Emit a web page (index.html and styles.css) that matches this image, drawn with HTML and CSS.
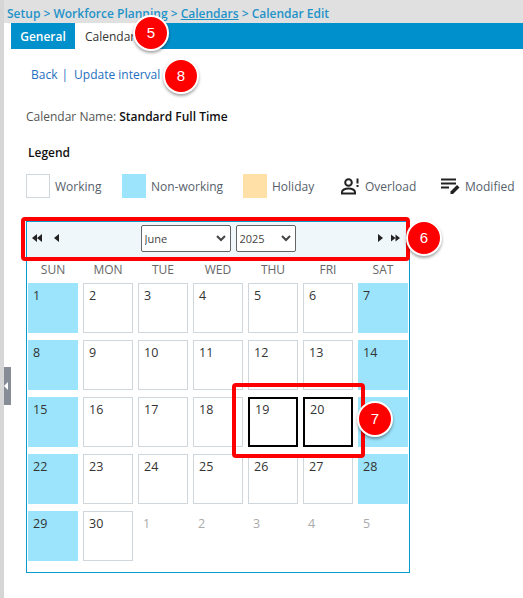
FILE: index.html
```html
<!DOCTYPE html>
<html lang="en">

<head>
    <meta charset="utf-8">
    <meta name="viewport" content="width=device-width, initial-scale=1.0">
    <title>Calendar Edit</title>
    <link rel="stylesheet" href="styles.css">
</head>

<body>
    <div class="handle"><span class="handleArrow"></span></div>

    <header class="crumbs">
        <span>Setup &gt; Workforce Planning &gt; <a href="#">Calendars</a> &gt; Calendar Edit</span>
    </header>

    <nav class="tabs">
        <button class="tab valgt">General</button>
        <button class="tab">Calendar</button>
    </nav>

    <main class="content">
        <p class="links"><a href="#">Back</a><span class="sep">|</span><a href="#">Update interval</a></p>
        <p class="calName">Calendar Name: <b>Standard Full Time</b></p>
        <h2 class="legendTitle">Legend</h2>

        <div class="legend">
            <div class="legendItem itemWorking"><span class="swatch working"></span>Working</div>
            <div class="legendItem itemNon"><span class="swatch nonworking"></span>Non-working</div>
            <div class="legendItem itemHoliday"><span class="swatch holiday"></span>Holiday</div>
            <div class="legendItem itemOverload">
                <svg width="18" height="17" viewBox="0 0 18 17" fill="none" stroke="#222" stroke-width="2">
                    <circle cx="7.5" cy="4.5" r="3.3" />
                    <path d="M1 15.5v-1.5c0-2 3-3.5 6.5-3.5s6.5 1.500 6.500 3.500v1.500z" />
                    <path d="M16.500 0.500v5M16.500 7v2" />
                </svg>
                Overload
            </div>
            <div class="legendItem itemModified">
                <svg width="19" height="17" viewBox="0 0 19 17" fill="#222">
                    <rect x="0" y="0.500" width="15" height="2" />
                    <rect x="0" y="4.500" width="15" height="2" />
                    <rect x="0" y="8.500" width="8" height="2" />
                    <path d="M9.500 16v-2.500l6.500-6.500 2.500 2.500-6.500 6.500z" />
                </svg>
                Modified
            </div>
        </div>

        <section class="calendar">
            <div class="calBar">
                <div class="navGroup">
                    <svg width="10" height="8" viewBox="0 0 10 8" fill="#222"><path d="M5 0v8L0 4zM10 0v8L5 4z" /></svg>
                    <svg class="navInner" width="5" height="8" viewBox="0 0 5 8" fill="#222"><path d="M5 0v8L0 4z" /></svg>
                </div>
                <div class="selects">
                    <select class="sel selMonth"><option>June</option></select>
                    <select class="sel selYear"><option>2025</option></select>
                </div>
                <div class="navGroup navRight">
                    <svg class="navInner" width="5" height="8" viewBox="0 0 5 8" fill="#222"><path d="M0 0v8l5-4z" /></svg>
                    <svg width="9" height="8" viewBox="0 0 10 8" fill="#222"><path d="M0 0v8l5-4zM5 0v8l5-4z" /></svg>
                </div>
            </div>

            <div class="weekdays">
                <span>SUN</span><span>MON</span><span>TUE</span><span>WED</span><span>THU</span><span>FRI</span><span>SAT</span>
            </div>

            <div class="days">
                <div class="day off">1</div><div class="day">2</div><div class="day">3</div><div class="day">4</div><div class="day">5</div><div class="day">6</div><div class="day off">7</div>
                <div class="day off">8</div><div class="day">9</div><div class="day">10</div><div class="day">11</div><div class="day">12</div><div class="day">13</div><div class="day off">14</div>
                <div class="day off">15</div><div class="day">16</div><div class="day">17</div><div class="day">18</div><div class="day picked">19</div><div class="day picked">20</div><div class="day off">21</div>
                <div class="day off">22</div><div class="day">23</div><div class="day">24</div><div class="day">25</div><div class="day">26</div><div class="day">27</div><div class="day off">28</div>
                <div class="day off">29</div><div class="day">30</div><div class="day next">1</div><div class="day next">2</div><div class="day next">3</div><div class="day next">4</div><div class="day next">5</div>
            </div>
        </section>
    </main>

    <!-- callouts on top of the screenshot -->
    <div class="redBox box6"></div>
    <div class="redBox box7"></div>
    <div class="badge badge5">5</div>
    <div class="badge badge8">8</div>
    <div class="badge badge6">6</div>
    <div class="badge badge7">7</div>
</body>

</html>
```
FILE: styles.css
```css
* {
    box-sizing: border-box;
}

html,
body {
    margin: 0;
    height: 598px;
    overflow: hidden;
}

body {
    position: relative;
    background-color: white;
    font-family: "Open Sans", sans-serif;
    font-size: 12px;
    color: #333;
    border-left: 4px solid #d6d6d6;
}

a {
    color: #1f6fc0;
    text-decoration: none;
}

/* breadcrumb */
.crumbs {
    height: 23px;
    margin-left: -4px;
    padding: 5px 0 0 7px;
    background-color: #e0e0e0;
    color: #1f93c9;
    font-size: 12px;
    font-weight: 600;
    line-height: 18px;
    white-space: nowrap;
}

.crumbs a {
    color: #1f93c9;
    text-decoration: underline;
}

/* tabs */
.tabs {
    display: flex;
    height: 26px;
    margin-left: 7px;
    background-color: #0090cb;
}

.tab {
    width: 64px;
    padding: 0;
    border: none;
    background-color: #0090cb;
    color: white;
    font-family: inherit;
    font-size: 12px;
    font-weight: 600;
}

.tab:not(.valgt) {
    width: 70px;
    background-color: white;
    color: #333;
    font-weight: 400;
    text-align: left;
    padding-left: 10px;
}

/* top of the content */
.content {
    padding-left: 22px;
}

.links {
    margin: 17px 0 0 5px;
    line-height: 18px;
}

.sep {
    margin: 0 6px 0 4px;
    color: #1f6fc0;
}

.calName {
    margin: 24px 0 0;
    line-height: 18px;
    color: #555;
}

.calName b {
    color: #111;
    font-weight: 600;
}

.legendTitle {
    margin: 18px 0 0 2px;
    font-size: 12px;
    font-weight: 600;
    line-height: 18px;
    color: #111;
}

.legend {
    display: flex;
    align-items: center;
    height: 24px;
    margin-top: 12px;
    color: #56606b;
    white-space: nowrap;
}

.legendItem {
    display: flex;
    align-items: center;
    gap: 5px;
}

.itemWorking {
    width: 96px;
}

.itemNon {
    width: 121px;
}

.itemHoliday {
    width: 98px;
}

.itemOverload {
    width: 100px;
    gap: 6px;
}

.swatch {
    width: 24px;
    height: 24px;
}

.working {
    border: 1px solid #d0d7dc;
}

.nonworking {
    background-color: #9be4fb;
}

.holiday {
    background-color: #ffe0a6;
}

/* calendar */
.calendar {
    width: 384px;
    height: 352px;
    margin-top: 23px;
    border: 1px solid #0a9bd0;
    font-size: 12.5px;
}

.calBar {
    display: flex;
    align-items: center;
    justify-content: space-between;
    height: 36px;
    padding: 0 5px 4px 5px;
    background-color: #f0f7fa;
}

.navGroup {
    display: flex;
    align-items: center;
    gap: 12px;
    width: 27px;
}

.navRight {
    gap: 8px;
    padding-left: 1px;
}

.navInner {
    flex: none;
}

.selects {
    display: flex;
    gap: 5px;
    margin-top: 1px;
}

.sel {
    height: 27px;
    padding: 0 0 0 3px;
    border: 1px solid #666;
    border-radius: 2px;
    appearance: none;
    background: white url("data:image/svg+xml,%3Csvg xmlns='http://www.w3.org/2000/svg' width='10' height='7' viewBox='0 0 10 7'%3E%3Cpath d='M1 1l4 4 4-4' fill='none' stroke='%23444' stroke-width='2'/%3E%3C/svg%3E") no-repeat right 4px center;
    color: #444;
    font-family: inherit;
    font-size: 11px;
}

.selMonth {
    width: 90px;
}

.selYear {
    width: 60px;
}

.weekdays {
    display: grid;
    grid-template-columns: repeat(7, 50px);
    column-gap: 5px;
    height: 25px;
    padding-left: 1px;
    color: #666;
    font-size: 12px;
    line-height: 24px;
    text-align: center;
}

.days {
    display: grid;
    grid-template-columns: repeat(7, 50px);
    grid-auto-rows: 50px;
    gap: 7px 5px;
    padding-left: 1px;
}

.day {
    padding: 3px 0 0 5px;
    border: 1px solid #d0d7dc;
    line-height: 18px;
}

.off {
    border: none;
    padding: 4px 0 0 5px;
    background-color: #9be4fb;
}

.next {
    border: none;
    padding: 4px 0 0 5px;
    color: #aaa;
}

.picked {
    border: 2px solid black;
    padding: 2px 0 0 5px;
}

/* callouts */
.handle {
    position: absolute;
    top: 367px;
    left: -3px;
    display: flex;
    align-items: center;
    justify-content: center;
    width: 10px;
    height: 38px;
    background-color: #878d96;
}

.handleArrow {
    border: 4px solid transparent;
    border-left: none;
    border-right: 4px solid white;
}

.redBox {
    position: absolute;
    border: 4px solid #f00;
    border-radius: 4px;
}

.box6 {
    top: 217px;
    left: 17px;
    width: 389px;
    height: 44px;
}

.box7 {
    top: 383px;
    left: 228px;
    width: 133px;
    height: 75px;
}

.badge {
    position: absolute;
    width: 36px;
    height: 36px;
    border: 2px solid white;
    border-radius: 50%;
    background-color: #f00;
    box-shadow: 0 2px 3px rgba(0, 0, 0, 0.35);
    color: white;
    font-family: "Liberation Sans", sans-serif;
    font-size: 15px;
    line-height: 32px;
    text-align: center;
}

.badge5 {
    top: 15px;
    left: 129px;
}

.badge8 {
    top: 58px;
    left: 159px;
}

.badge6 {
    top: 220px;
    left: 402px;
}

.badge7 {
    top: 401px;
    left: 353px;
}
```
